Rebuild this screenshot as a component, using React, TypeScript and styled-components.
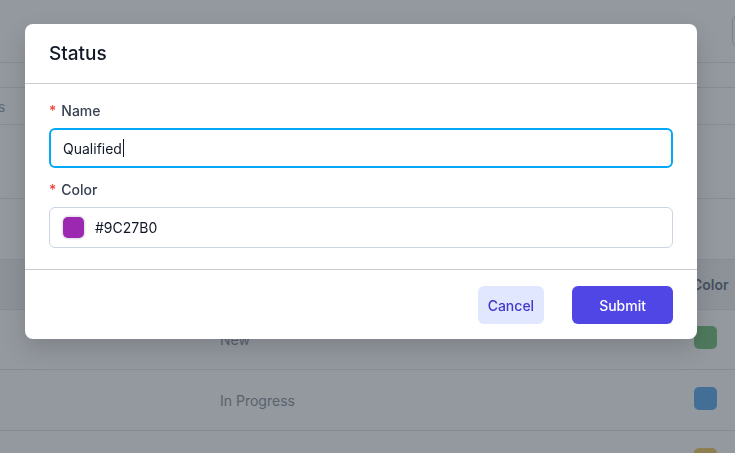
import React from 'react';
import styled, { createGlobalStyle } from 'styled-components';

const GlobalStyle = createGlobalStyle`
  html, body {
    margin: 0;
    padding: 0;
    height: 100%;
    overflow: hidden;
    background: #ffffff;
    font-family: Inter, "Noto Sans", sans-serif;
  }
`;

// page behind the dialog
const Page = styled.div`
  width: 735px;
  height: 453px;
  overflow: hidden;
  background: #ffffff;
  color: #9ca3af;
  font-size: 14px;
`;
const TopBar = styled.div`
  height: 63px;
  display: flex;
  justify-content: flex-end;
  align-items: center;
  border-bottom: 1px solid #e5e7eb;
  box-sizing: border-box;
`;
const TopButton = styled.div`
  width: 30px;
  height: 30px;
  margin-right: -29px;
  border: 1px solid #d1d5db;
  border-radius: 6px;
`;
const Band = styled.div<{ $h: number; $shade?: boolean }>`
  height: ${p => p.$h}px;
  box-sizing: border-box;
  border-bottom: 1px solid #e5e7eb;
  background: ${p => (p.$shade ? '#f1f2f4' : '#ffffff')};
  display: flex;
  align-items: center;
`;
const EdgeText = styled.span`
  margin-left: -52px;
  color: #9ca3af;
`;
const NameCell = styled.div`
  margin-left: 220px;
  flex: 1;
  font-size: 14px;
  color: #8f959e;
`;
const HeadCell = styled.div`
  margin-left: auto;
  width: 43px;
  font-weight: 600;
  color: #6b7280;
`;
const SwatchCell = styled.div`
  width: 41px;
  display: flex;
  margin-top: -4px;
`;
const Swatch = styled.div<{ $c: string }>`
  width: 23px;
  height: 23px;
  border-radius: 5px;
  background: ${p => p.$c};
`;

// overlay + dialog
const Overlay = styled.div`
  position: fixed;
  inset: 0;
  background: rgba(31, 41, 55, 0.48);
`;
const Dialog = styled.div`
  position: fixed;
  left: 25px;
  top: 24px;
  width: 672px;
  background: #ffffff;
  border-radius: 8px;
  box-shadow: 0 10px 25px rgba(0, 0, 0, 0.15);
  color: #1f2937;
`;
const Header = styled.div`
  height: 60px;
  box-sizing: border-box;
  padding: 0 24px;
  display: flex;
  align-items: center;
  border-bottom: 1px solid #c9cbcf;
`;
const Title = styled.h2`
  margin: 0;
  font-size: 19px;
  font-weight: 500;
  color: #111827;
`;
const Body = styled.div`
  padding: 17px 24px 21px;
  display: flex;
  flex-direction: column;
`;
const Label = styled.label`
  font-size: 14px;
  font-weight: 500;
  color: #374151;
  line-height: 20px;
  margin-bottom: 7px;
  display: flex;
  gap: 5px;
  &::before {
    content: '*';
    color: #ef4444;
  }
`;
const Field = styled.div<{ $focused?: boolean }>`
  height: ${p => (p.$focused ? 40 : 41)}px;
  box-sizing: border-box;
  border-radius: 6px;
  border: ${p => (p.$focused ? '2px solid #03a9f4' : '1px solid #cbd5e1')};
  padding: 0 ${p => (p.$focused ? 12 : 13)}px;
  display: flex;
  align-items: center;
  font-size: 14px;
  color: #111827;
  margin-bottom: 12px;
  &:last-child {
    margin-bottom: 0;
  }
`;
const Caret = styled.span`
  display: inline-block;
  width: 1px;
  height: 18px;
  background: #111827;
  margin-left: 1px;
`;
const ColorChip = styled.span<{ $c: string }>`
  width: 21px;
  height: 21px;
  border-radius: 5px;
  background: ${p => p.$c};
  box-shadow: 0 0 0 1.5px #e5e7eb;
  margin-right: 11px;
`;
const Footer = styled.div`
  border-top: 1px solid #c9cbcf;
  padding: 16px 24px 15px;
  display: flex;
  justify-content: flex-end;
  gap: 28px;
`;
const Button = styled.button<{ $primary?: boolean }>`
  height: 38px;
  border: none;
  border-radius: 6px;
  font-family: Inter, sans-serif;
  font-size: 14px;
  font-weight: 500;
  padding: 0 ${p => (p.$primary ? 27 : 10)}px;
  background: ${p => (p.$primary ? '#4f46e5' : '#e0e7ff')};
  color: ${p => (p.$primary ? '#ffffff' : '#4338ca')};
`;

export default function App() {
  return (
    <>
      <GlobalStyle />
      <Page>
        <TopBar>
          <TopButton />
        </TopBar>
        <Band $h={25} />
        <Band $h={37}>
          <EdgeText>Statuses</EdgeText>
        </Band>
        <Band $h={74} />
        <Band $h={61} />
        <Band $h={50} $shade>
          <HeadCell>Color</HeadCell>
        </Band>
        <Band $h={60}>
          <NameCell>New</NameCell>
          <SwatchCell>
            <Swatch $c="#7cc382" />
          </SwatchCell>
        </Band>
        <Band $h={61}>
          <NameCell>In Progress</NameCell>
          <SwatchCell>
            <Swatch $c="#64aef0" />
          </SwatchCell>
        </Band>
        <Band $h={61}>
          <NameCell />
          <SwatchCell>
            <Swatch $c="#f2cd6b" />
          </SwatchCell>
        </Band>
      </Page>
      <Overlay />
      <Dialog>
        <Header>
          <Title>Status</Title>
        </Header>
        <Body>
          <Label>Name</Label>
          <Field $focused>
            Qualified
            <Caret />
          </Field>
          <Label>Color</Label>
          <Field>
            <ColorChip $c="#9C27B0" />
            #9C27B0
          </Field>
        </Body>
        <Footer>
          <Button>Cancel</Button>
          <Button $primary>Submit</Button>
        </Footer>
      </Dialog>
    </>
  );
}
